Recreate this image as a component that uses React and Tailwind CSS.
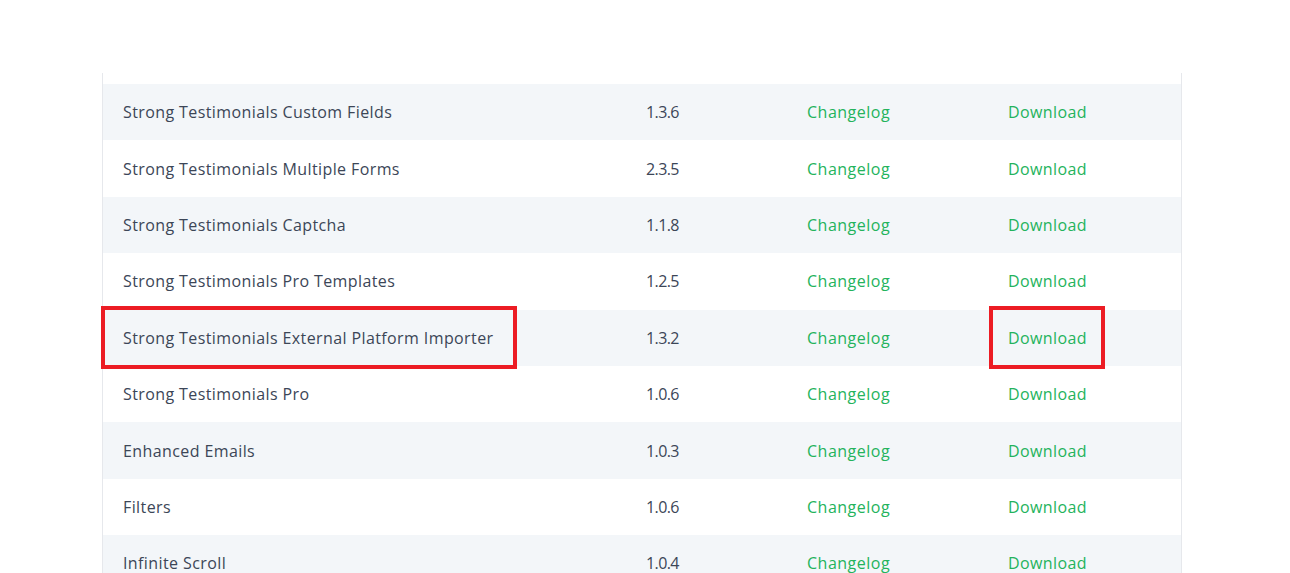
const addons = [
  { name: "Strong Testimonials Custom Fields", version: "1.3.6" },
  { name: "Strong Testimonials Multiple Forms", version: "2.3.5" },
  { name: "Strong Testimonials Captcha", version: "1.1.8" },
  { name: "Strong Testimonials Pro Templates", version: "1.2.5" },
  { name: "Strong Testimonials External Platform Importer", version: "1.3.2", marked: true },
  { name: "Strong Testimonials Pro", version: "1.0.6" },
  { name: "Enhanced Emails", version: "1.0.3" },
  { name: "Filters", version: "1.0.6" },
  { name: "Infinite Scroll", version: "1.0.4" },
];

function Row({ addon, index }) {
  const shaded = index % 2 === 0;
  return (
    <div
      className={
        "relative grid grid-cols-[523px_161px_201px_195px] h-[56.4px] items-center text-[16px] " +
        (shaded ? "bg-[#f3f6f9]" : "bg-white")
      }
    >
      <div className="pl-[20px] text-[#3c4657] tracking-[0.4px]">{addon.name}</div>
      <div className="pl-[20px] text-[#3c4657] tracking-[-0.6px]">{addon.version}</div>
      <div className="pl-[20px] tracking-[0.5px]">
        <a href="#" className="text-[#24b35c]">Changelog</a>
      </div>
      <div className="pl-[20px] tracking-[0.4px]">
        <a href="#" className="text-[#24b35c]">Download</a>
      </div>
      {addon.marked && (
        <>
          {/* annotation boxes drawn over the row */}
          <div className="absolute z-10 left-[-2px] top-[-4px] w-[416px] h-[63px] border-[4px] border-[#ec1c24]" />
          <div className="absolute z-10 left-[886px] top-[-4px] w-[116px] h-[63px] border-[4px] border-[#ec1c24]" />
        </>
      )}
    </div>
  );
}

export default function App() {
  return (
    <div
      className="w-[1290px] h-[573px] overflow-hidden bg-white pt-[73px]"
      style={{ fontFamily: "'Open Sans', Lato, sans-serif" }}
    >
      <div className="ml-[102px] w-[1080px] border-x border-[#e6e8ec]">
        <div className="h-[11px] bg-white" />
        {addons.map((addon, i) => (
          <Row key={addon.name} addon={addon} index={i} />
        ))}
      </div>
    </div>
  );
}
